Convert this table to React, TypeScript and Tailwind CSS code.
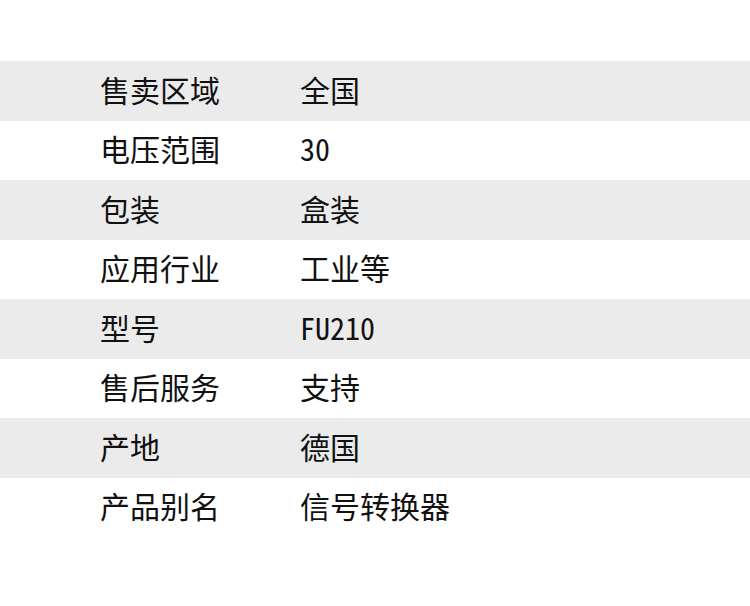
const rows = [
  ['售卖区域', '全国'],
  ['电压范围', '30'],
  ['包装', '盒装'],
  ['应用行业', '工业等'],
  ['型号', 'FU210'],
  ['售后服务', '支持'],
  ['产地', '德国'],
  ['产品别名', '信号转换器'],
];

export default function App() {
  return (
    <div
      className="w-[750px] h-[606px] bg-white pt-[61px] text-[#111111]"
      style={{ fontFamily: '"Noto Sans Mono CJK SC", "Noto Sans CJK SC", sans-serif' }}
    >
      {rows.map(([label, value], i) => (
        <div
          key={label}
          className={`flex items-center h-[59.5px] pb-[4px] text-[30px] leading-none font-light ${i % 2 === 0 ? 'bg-[#ebebeb]' : 'bg-white'}`}
        >
          <div className="w-[300px] pl-[100px]">{label}</div>
          <div>{value}</div>
        </div>
      ))}
    </div>
  );
}
